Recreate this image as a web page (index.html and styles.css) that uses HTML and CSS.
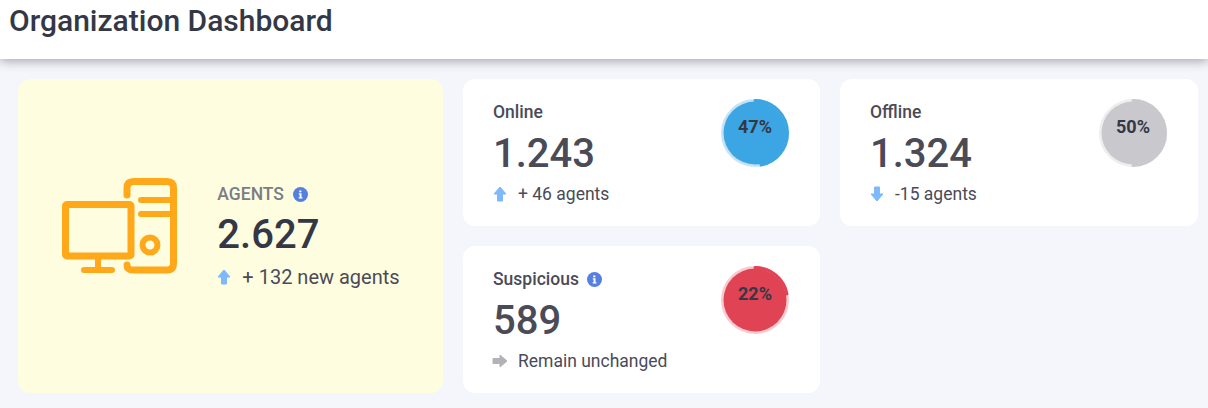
FILE: index.html
```html
<!DOCTYPE html>
<html>
<head>
	<meta charset="utf-8">
	<title>Organization Dashboard</title>
	<link rel="stylesheet" href="styles.css">
</head>
<body>
	<header class="topbar">
		<h1 class="title">Organization Dashboard</h1>
	</header>
	<main class="grid">
		<section class="card total">
			<svg class="total-icon" width="116" height="120" viewBox="61 177 116 120" fill="none" stroke="#ffa91a" stroke-width="7" stroke-linecap="round" stroke-linejoin="round">
				<rect x="65.5" y="205.5" width="65.5" height="51.5" rx="1.5"/>
				<path d="M98 258V271M84 271H112" stroke-width="6"/>
				<path d="M127 196V189Q127 182.5 133.500 182.500H167Q173.500 182.500 173.500 189V264.500Q173.500 271 167 271H133.500Q127 271 127 266"/>
				<path d="M141 201H173M141 215H173" stroke-width="6"/>
				<circle cx="150" cy="246" r="7.500" stroke-width="6"/>
			</svg>
			<div class="total-text">
				<div class="total-label">AGENTS
					<svg class="info" width="15" height="15" viewBox="0 0 15 15"><circle cx="7.500" cy="7.500" r="7.500" fill="#5680e0"/><path d="M6.200 3.400h2.200v1.900H6.200zM5.800 6.300h2.700v3.900h.9v1.300H5.700v-1.300h.9V7.600h-.8z" fill="#fff"/></svg>
				</div>
				<div class="total-value">2.627</div>
				<div class="change total-change">
					<svg class="arrow" width="14" height="16" viewBox="0 0 14 16"><path d="M7 1L13 8H9.500V15H4.500V8H1z" fill="#7db9fb" stroke="#7db9fb" stroke-linejoin="round"/></svg>
					+ 132 new agents
				</div>
			</div>
		</section>

		<section class="card stat">
			<div>
				<div class="stat-label">Online</div>
				<div class="stat-value">1.243</div>
				<div class="change">
					<svg class="arrow" width="14" height="16" viewBox="0 0 14 16"><path d="M7 1L13 8H9.500V15H4.500V8H1z" fill="#7db9fb" stroke="#7db9fb" stroke-linejoin="round"/></svg>
					+ 46 agents
				</div>
			</div>
			<div class="donut">
				<svg width="70" height="70" viewBox="0 0 70 70">
					<circle cx="35" cy="35" r="32.500" fill="none" stroke="#c6e3f6" stroke-width="3"/>
					<circle cx="35" cy="35" r="31.500" fill="#3ca5e3"/>
					<circle cx="35" cy="35" r="32.500" fill="none" stroke="#3ca5e3" stroke-width="3" stroke-linecap="round" pathLength="100" stroke-dasharray="47 100" transform="rotate(-90 35 35)"/>
				</svg>
				<span class="donut-text">47%</span>
			</div>
		</section>

		<section class="card stat">
			<div>
				<div class="stat-label">Offline</div>
				<div class="stat-value">1.324</div>
				<div class="change">
					<svg class="arrow" width="14" height="16" viewBox="0 0 14 16"><path d="M7 15L13 8H9.500V1H4.500V8H1z" fill="#7db9fb" stroke="#7db9fb" stroke-linejoin="round"/></svg>
					-15 agents
				</div>
			</div>
			<div class="donut">
				<svg width="70" height="70" viewBox="0 0 70 70">
					<circle cx="35" cy="35" r="32.500" fill="none" stroke="#eeeeef" stroke-width="3"/>
					<circle cx="35" cy="35" r="31.500" fill="#c9c8cd"/>
					<circle cx="35" cy="35" r="32.500" fill="none" stroke="#c9c8cd" stroke-width="3" stroke-linecap="round" pathLength="100" stroke-dasharray="50 100" transform="rotate(-90 35 35)"/>
				</svg>
				<span class="donut-text">50%</span>
			</div>
		</section>

		<section class="card stat">
			<div>
				<div class="stat-label">Suspicious
					<svg class="info" width="15" height="15" viewBox="0 0 15 15"><circle cx="7.500" cy="7.500" r="7.500" fill="#5680e0"/><path d="M6.200 3.400h2.200v1.900H6.200zM5.800 6.300h2.700v3.900h.9v1.300H5.700v-1.300h.9V7.600h-.8z" fill="#fff"/></svg>
				</div>
				<div class="stat-value">589</div>
				<div class="change">
					<svg class="arrow arrow-flat" width="16" height="14" viewBox="0 0 16 14"><path d="M15 7L8 1V4.500H1V9.500H8V13z" fill="#b2b3b8" stroke="#b2b3b8" stroke-linejoin="round"/></svg>
					Remain unchanged
				</div>
			</div>
			<div class="donut">
				<svg width="70" height="70" viewBox="0 0 70 70">
					<circle cx="35" cy="35" r="32.500" fill="none" stroke="#f6ccd1" stroke-width="3"/>
					<circle cx="35" cy="35" r="31.500" fill="#e04354"/>
					<circle cx="35" cy="35" r="32.500" fill="none" stroke="#e04354" stroke-width="3" stroke-linecap="round" pathLength="100" stroke-dasharray="22 100" transform="rotate(-90 35 35)"/>
				</svg>
				<span class="donut-text">22%</span>
			</div>
		</section>
	</main>
</body>
</html>
```

FILE: styles.css
```css
* {
	box-sizing: border-box;
	font-family: Roboto, "Liberation Sans", sans-serif;
}

body {
	background: #f5f6fb;
	color: #4a4b57;
	height: 408px;
	margin: 0;
	overflow: hidden;
}

.topbar {
	background: white;
	box-shadow: 0 2px 10px rgba(60, 60, 75, 0.45);
	height: 59px;
	padding-left: 9px;
}

.title {
	color: #343846;
	font-size: 30px;
	font-weight: 500;
	line-height: 42px;
	margin: 0;
}

.grid {
	display: grid;
	gap: 20px;
	grid-template-columns: 425px 357px 358px;
	grid-template-rows: 147px 147px;
	margin-left: 18px;
	margin-top: 20px;
}

.card {
	background: white;
	border-radius: 12px;
}

.total {
	align-items: center;
	background: #fffde0;
	display: flex;
	gap: 40px;
	grid-row: span 2;
	justify-content: center;
}

.total-label {
	align-items: center;
	color: #7a7c88;
	display: flex;
	font-size: 17.500px;
	font-weight: 500;
	gap: 9px;
	line-height: 22px;
}

.total-value {
	color: #343846;
	font-size: 40px;
	font-weight: 500;
	line-height: 50px;
	margin-top: 5px;
}

.stat {
	align-items: flex-start;
	display: flex;
	justify-content: space-between;
	padding: 22px 30px 0;
}

.stat-label {
	align-items: center;
	display: flex;
	font-size: 17.500px;
	font-weight: 500;
	gap: 8px;
	line-height: 22px;
}

.stat-value {
	font-size: 40px;
	font-weight: 500;
	line-height: 50px;
	margin-top: 6px;
}

.change {
	align-items: center;
	display: flex;
	font-size: 17.500px;
	gap: 11px;
	line-height: 24px;
	margin-top: 3px;
}

.total-change {
	font-size: 20px;
	margin-top: 5px;
}

.arrow {
	flex: none;
}

.arrow-flat {
	margin-left: -1px;
	margin-right: -1px;
}

.donut {
	height: 70px;
	margin-top: -3px;
	position: relative;
	width: 70px;
}

.donut svg {
	display: block;
}

.donut-text {
	color: #343846;
	font-size: 18px;
	font-weight: 700;
	left: 0;
	position: absolute;
	right: 0;
	text-align: center;
	top: 18px;
}
```
